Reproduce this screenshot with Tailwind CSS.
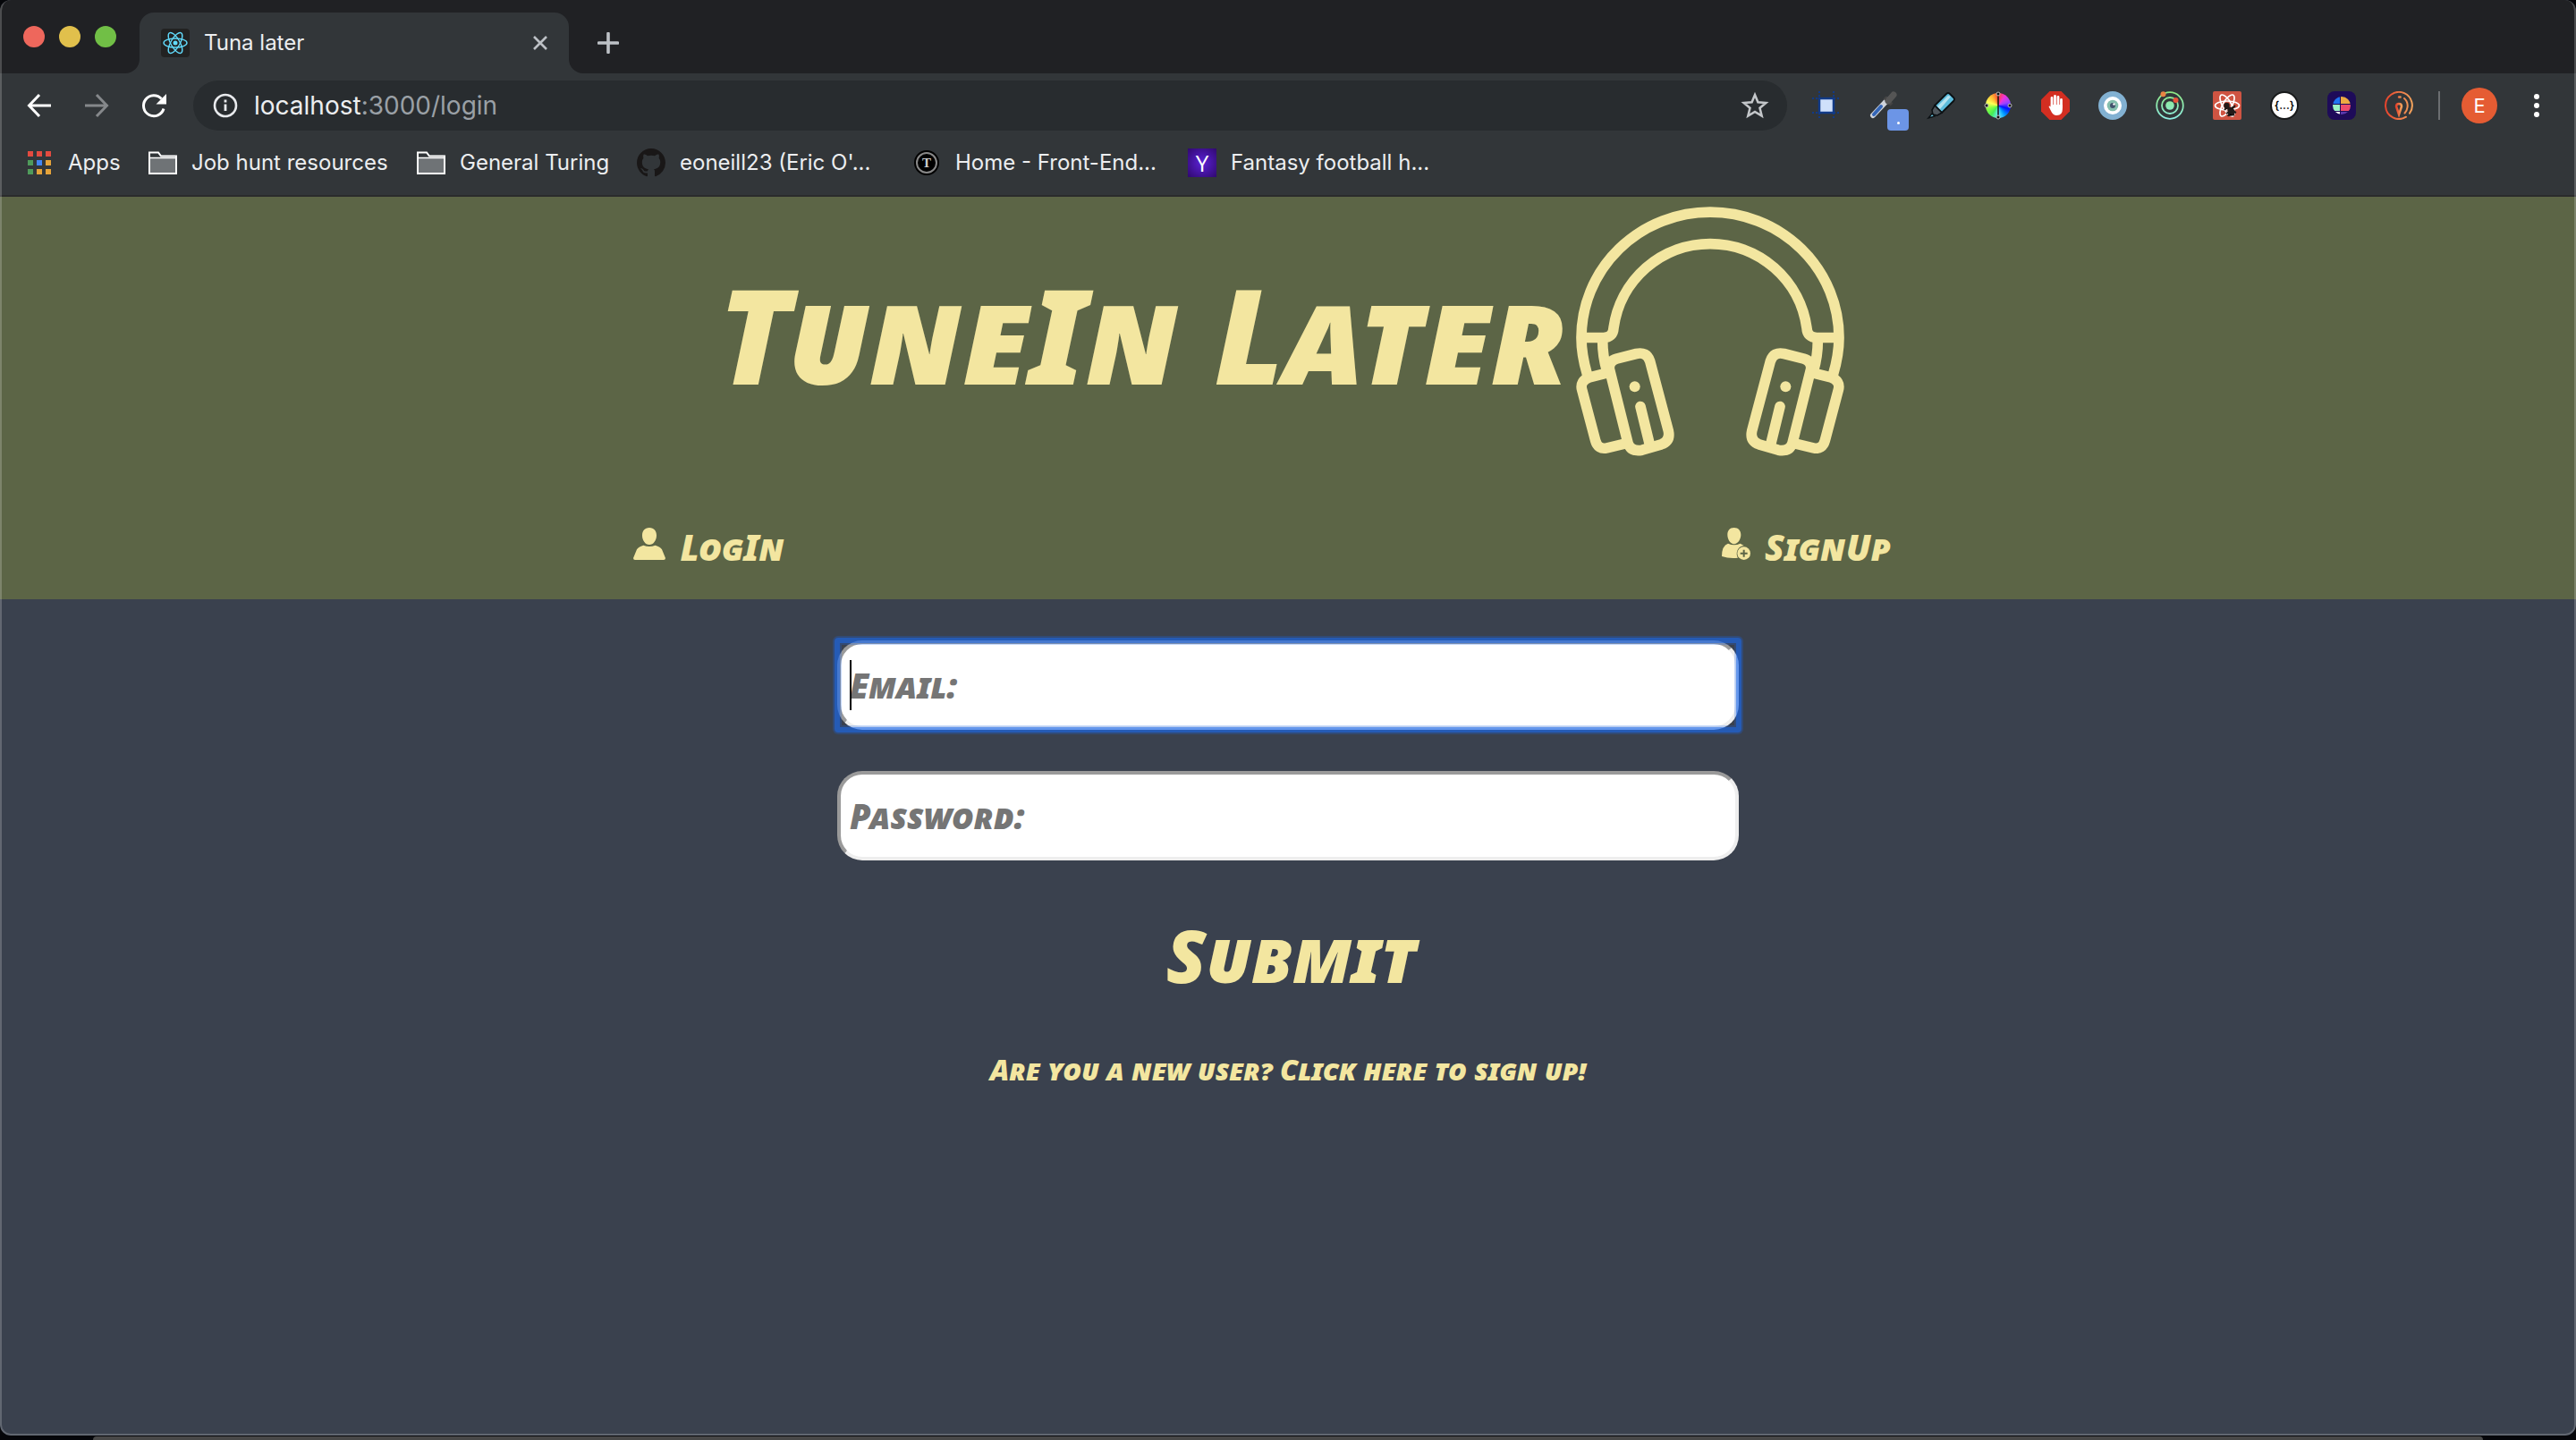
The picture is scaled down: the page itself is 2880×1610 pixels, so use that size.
<!DOCTYPE html>
<html lang="en">
<head>
<meta charset="utf-8">
<title>Tuna later</title>
<script src="https://cdn.jsdelivr.net/npm/@tailwindcss/browser@4"></script>
</head>
<body class="bg-[#05060a]">
<div class="flex min-h-screen flex-col font-['Inter',sans-serif] text-[#eceef0]">
<div class="relative flex flex-1 flex-col overflow-hidden rounded-[12px] bg-[#3a414e]">

  <!-- Tab strip -->
  <div class="flex h-[82px] items-end bg-[#202124]">
    <div class="flex gap-4 self-center pl-[26px]">
      <button aria-label="Close window" class="block size-6 rounded-full bg-[#ee675c]"></button>
      <button aria-label="Minimise window" class="block size-6 rounded-full bg-[#e1c04c]"></button>
      <button aria-label="Zoom window" class="block size-6 rounded-full bg-[#71bf46]"></button>
    </div>
    <svg class="ml-[10px] size-4 text-[#323639]" viewBox="0 0 16 16" aria-hidden="true"><path fill="currentColor" d="M16 0v16H0A16 16 0 0 0 16 0z"/></svg>
    <div class="flex h-[68px] w-[480px] items-center rounded-t-[16px] bg-[#323639] pr-[22px] pl-6">
      <svg class="size-8" viewBox="0 0 32 32" aria-hidden="true"><rect width="32" height="32" rx="4" fill="#222"/><g fill="none" stroke="#61dafb" stroke-width="1.4"><ellipse cx="16" cy="16" rx="13" ry="5"/><ellipse cx="16" cy="16" rx="13" ry="5" transform="rotate(60 16 16)"/><ellipse cx="16" cy="16" rx="13" ry="5" transform="rotate(120 16 16)"/></g><circle cx="16" cy="16" r="2.5" fill="#61dafb"/></svg>
      <span class="ml-4 flex-1 text-[24px] leading-8">Tuna later</span>
      <button aria-label="Close tab"><svg class="block size-5" viewBox="0 0 20 20"><path d="M3 3l14 14M17 3L3 17" stroke="#bdc1c6" stroke-width="2.6"/></svg></button>
    </div>
    <svg class="size-4 text-[#323639]" viewBox="0 0 16 16" aria-hidden="true"><path fill="currentColor" d="M0 0v16h16A16 16 0 0 1 0 0z"/></svg>
    <button aria-label="New tab" class="mb-[22px] ml-4"><svg class="block size-6" viewBox="0 0 24 24"><path d="M12 1.500v21M1.500 12h21" stroke="#bdc1c6" stroke-width="3.600" stroke-linecap="round"/></svg></button>
  </div>

  <!-- Toolbar -->
  <div class="flex h-[72px] items-center bg-[#323639] pr-7 pl-7">
    <div class="flex gap-8">
      <button aria-label="Back"><svg class="block size-8" viewBox="0 0 32 32" fill="none" stroke="#fff" stroke-width="3"><path d="M29 16H5M16 4L4.500 16 16 28"/></svg></button>
      <button aria-label="Forward"><svg class="block size-8" viewBox="0 0 32 32" fill="none" stroke="#85888b" stroke-width="3"><path d="M3 16h24M16 4l11.500 12L16 28"/></svg></button>
      <button aria-label="Reload"><svg class="block size-8" viewBox="0 0 32 32"><path d="M27 19.500A11.500 11.500 0 1 1 24.500 8.500" fill="none" stroke="#fff" stroke-width="3"/><path d="M30 3v11.500H18.500z" fill="#fff"/></svg></button>
    </div>
    <div class="ml-7 flex h-14 flex-1 items-center rounded-full bg-[#282c2f] pr-5 pl-[22px]">
      <svg class="size-7" viewBox="0 0 28 28" aria-hidden="true"><circle cx="14" cy="14" r="12" fill="none" stroke="#e8eaed" stroke-width="2.600"/><path d="M14 12.500v7.500M14 7.500v3" stroke="#e8eaed" stroke-width="2.800"/></svg>
      <p class="ml-[18px] flex-1 text-[28px] leading-9"><span>localhost</span><span class="text-[#9aa0a6]">:3000/login</span></p>
      <button aria-label="Bookmark this page"><svg class="block size-8" viewBox="0 0 32 32"><path d="M16 4l3.400 8.300 9 .7-6.900 5.800 2.200 8.800L16 22.900l-7.700 4.700 2.200-8.800L3.600 13l9-.7z" fill="none" stroke="#c4c7ca" stroke-width="2.500"/></svg></button>
    </div>
    <div class="ml-7 flex items-center gap-8">
      <button aria-label="Window resizer"><svg class="block size-8" viewBox="0 0 32 32"><path d="M0 8h32M0 24h32M8 0v32M24 0v32" stroke="#113a86" stroke-width="2" stroke-dasharray="2 2"/><rect x="8" y="8" width="16" height="16" fill="#cfe0fb" stroke="#113a86" stroke-width="2.500"/></svg></button>
      <button aria-label="Colour picker" class="relative"><svg class="block size-8" viewBox="0 0 32 32"><path d="M4 27L20 10" stroke="#cfd3da" stroke-width="6" stroke-linecap="round"/><path d="M5 26l8-9" stroke="#3466b8" stroke-width="4" stroke-linecap="round"/><path d="M17 7l8 8" stroke="#444" stroke-width="4"/><path d="M21 11l6-7" stroke="#555" stroke-width="7" stroke-linecap="round"/></svg><span class="absolute top-5 left-5 flex size-6 items-end justify-center rounded-[4px] bg-[#6c95e6] pb-[7px]"><i class="block size-[3px] rounded-full bg-white"></i></span></button>
      <button aria-label="Highlighter"><svg class="block size-8" viewBox="0 0 32 32"><path d="M9 16L22 3q2-2 4 0l4 4q2 2 0 4L17 24z" fill="#5cbcdc" stroke="#0b1013" stroke-width="1.800"/><path d="M12 17L24 5l3 1-12 14z" fill="#b5e2ef"/><path d="M9 16l8 8-5 3-5-1-1-5z" fill="#4e565c" stroke="#0b1013" stroke-width="1.500"/><path d="M6 25l3 3-7 2z" fill="#6fd3f0" stroke="#0b1013" stroke-width="1.500"/></svg></button>
      <button aria-label="Colour wheel" class="relative size-8"><span class="mx-auto block size-7 rounded-full bg-[conic-gradient(#f43,#e3d,#94f,#01f,#09f,#6ef,#4e5,#8f4,#ff5,#fb3,#f43)]"></span><svg class="absolute inset-0 size-8" viewBox="0 0 32 32" fill="none" stroke="#111" stroke-width="1.500"><path d="M16 5v22"/><g fill="#111" stroke="#bbb" stroke-width="1"><circle cx="16" cy="3" r="2"/><circle cx="16" cy="29" r="2"/><circle cx="3" cy="16" r="2"/><circle cx="29" cy="16" r="2"/></g></svg></button>
      <button aria-label="Ad blocker"><svg class="block size-8" viewBox="0 0 32 32"><path d="M9.500 0h13L32 9.500v13L22.500 32h-13L0 22.500v-13z" fill="#d32e21"/><path d="M12 18V7.500M15.500 17V5.500M19 17V6.500M22.500 18V9.500" stroke="#fff" stroke-width="2.800" stroke-linecap="round"/><path d="M10.600 15h13.300v5q0 7-6.400 7-4.500 0-6.500-5l-2.500-5q1.500-1.500 3 1z" fill="#fff"/></svg></button>
      <button aria-label="Vision check"><svg class="block size-8" viewBox="0 0 32 32"><circle cx="16" cy="16" r="16" fill="#82b1d2"/><circle cx="16" cy="16" r="10" fill="#fff"/><circle cx="16" cy="16" r="6.300" fill="#85bfae"/><circle cx="16" cy="16" r="3" fill="#43546c"/><circle cx="17.500" cy="14.500" r="1.200" fill="#fff"/></svg></button>
      <button aria-label="Orbit"><svg class="block size-8" viewBox="0 0 32 32"><defs><linearGradient id="orbit" x1="0" y1="0" x2="0" y2="32" gradientUnits="userSpaceOnUse"><stop stop-color="#8ee87f"/><stop offset="1" stop-color="#8debe5"/></linearGradient></defs><g fill="none" stroke="url(#orbit)" stroke-width="1.800"><circle cx="16" cy="16" r="14.800"/><circle cx="16" cy="16" r="9"/></g><circle cx="16" cy="16" r="4.800" fill="url(#orbit)"/><circle cx="8.500" cy="3.300" r="3" fill="#e88443"/><circle cx="22.500" cy="10" r="3" fill="#e8533a"/></svg></button>
      <button aria-label="React developer tools"><svg class="block size-8" viewBox="0 0 32 32"><rect width="32" height="32" rx="2" fill="#cf5442"/><g fill="none" stroke="#fff" stroke-width="1.700"><ellipse cx="16" cy="16" rx="13.500" ry="5"/><ellipse cx="16" cy="16" rx="13.500" ry="5" transform="rotate(60 16 16)"/><ellipse cx="16" cy="16" rx="13.500" ry="5" transform="rotate(120 16 16)"/></g><path d="M13 21l3-4 4 4 5-5M17 28l2-5 5 4M20 21l6 3M15 25l5-3" stroke="#221a18" stroke-width="2"/><circle cx="15.500" cy="16" r="3.200" fill="#221a18"/><ellipse cx="20.500" cy="22" rx="3.500" ry="5" transform="rotate(-42 20.500 22)" fill="#221a18"/></svg></button>
      <button aria-label="JSON formatter" class="flex size-8 items-center justify-center rounded-full border-2 border-[#17191a] bg-white font-['Inter',sans-serif] text-[12px] leading-none font-semibold text-black">{...}</button>
      <button aria-label="Screen capture"><svg class="block size-8" viewBox="0 0 32 32"><defs><clipPath id="disc"><circle cx="16" cy="16" r="10"/></clipPath></defs><rect width="32" height="32" rx="8" fill="#1e0b59"/><g clip-path="url(#disc)"><path d="M6 6h8v8H6z" fill="#2074f0"/><path d="M15 6h11v8H15z" fill="#eea942"/><path d="M6 15h8v7H6z" fill="#9bf3c4"/><path d="M15 15h11v7H15z" fill="#ee4a6c"/><path d="M6 23h8v4H6z" fill="#fff"/><path d="M15 23h11v4H15z" fill="#5b38ad"/></g></svg></button>
      <button aria-label="Toggle"><svg class="block size-8" viewBox="0 0 32 32"><defs><linearGradient id="ember"><stop stop-color="#e6432c"/><stop offset="1" stop-color="#f2a35c"/></linearGradient></defs><g fill="none" stroke="url(#ember)" stroke-width="2" stroke-linecap="round"><path d="M24 28.700A15 15 0 1 1 22 2.200a15 15 0 0 1 6 22.500M22 8q4.500 4 3.500 10-.5 4-3 6.500"/><path d="M16 26l-3-9q0-3 3-3t3 3zM16 6.500h1.500" stroke-width="2.500"/></g></svg></button>
    </div>
    <div class="ml-7 h-8 w-[2px] bg-[#6b6e71]"></div>
    <button aria-label="Profile" class="ml-6 flex size-10 items-center justify-center rounded-full bg-[#e55c33] text-[22px] leading-none text-white">E</button>
    <button aria-label="Menu" class="ml-7"><svg class="block size-8" viewBox="0 0 32 32" fill="#fff"><circle cx="16" cy="6" r="3"/><circle cx="16" cy="16" r="3"/><circle cx="16" cy="26" r="3"/></svg></button>
  </div>

  <!-- Bookmarks -->
  <nav aria-label="Bookmarks" class="flex h-[66px] items-center border-b-2 border-[#2a2b2c] bg-[#323639] pb-2 pl-[30px] text-[24px] leading-8 whitespace-nowrap">
    <a href="#" class="flex w-[136px] items-center gap-[18px]"><svg class="size-7" viewBox="0 0 28 28"><path d="M1 1h6v6H1zM11 1h6v6h-6zM21 1h6v6h-6z" fill="#e34b40"/><path d="M1 11h6v6H1zM1 21h6v6H1z" fill="#4f9b5b"/><path d="M11 11h6v6h-6z" fill="#4285f4"/><path d="M21 11h6v6h-6zM11 21h6v6h-6zM21 21h6v6h-6z" fill="#e5a33a"/></svg>Apps</a>
    <a href="#" class="flex w-[300px] items-center gap-4"><svg class="size-8" viewBox="0 0 32 32"><path d="M1 4.500h10l3 4h17V28H1z" fill="#323639" stroke="#fff" stroke-width="2"/><path d="M2 11h28v16H2z" fill="#6f7376"/><path d="M1 10.500h30" stroke="#fff" stroke-width="1.500"/></svg>Job hunt resources</a>
    <a href="#" class="flex w-[246px] items-center gap-4"><svg class="size-8" viewBox="0 0 32 32"><path d="M1 4.500h10l3 4h17V28H1z" fill="#323639" stroke="#fff" stroke-width="2"/><path d="M2 11h28v16H2z" fill="#6f7376"/><path d="M1 10.500h30" stroke="#fff" stroke-width="1.500"/></svg>General Turing</a>
    <a href="#" class="flex w-[308px] items-center gap-4"><svg class="size-8" viewBox="0 0 16 16"><path fill="#191717" d="M8 0C3.580 0 0 3.580 0 8c0 3.540 2.290 6.530 5.470 7.590.4.070.55-.17.55-.38 0-.19-.01-.82-.01-1.490-2.010.37-2.530-.49-2.690-.94-.09-.23-.48-.94-.82-1.130-.28-.15-.68-.52-.01-.53.63-.01 1.080.58 1.230.82.720 1.210 1.870.87 2.330.66.070-.52.280-.87.510-1.070-1.780-.2-3.640-.89-3.640-3.950 0-.87.310-1.590.820-2.150-.08-.2-.36-1.020.080-2.120 0 0 .670-.21 2.200.82.640-.18 1.320-.27 2-.27s1.360.09 2 .27c1.530-1.040 2.200-.82 2.200-.82.440 1.100.16 1.920.080 2.120.51.56.82 1.270.82 2.150 0 3.070-1.870 3.750-3.650 3.950.29.250.54.730.54 1.480 0 1.070-.01 1.930-.01 2.200 0 .21.150.46.550.38A8.010 8.010 0 0 0 16 8c0-4.420-3.580-8-8-8z"/></svg>eoneill23 (Eric O'...</a>
    <a href="#" class="flex w-[308px] items-center gap-4"><span class="flex size-8 items-center justify-center"><span class="flex size-7 items-center justify-center rounded-full border-2 border-black bg-black"><span class="flex size-6 items-center justify-center rounded-full border-2 border-[#888] font-['Liberation_Serif',serif] text-[15px] leading-none font-bold text-[#ccc]">T</span></span></span>Home - Front-End...</a>
    <a href="#" class="flex items-center gap-4"><span class="flex size-8 items-center justify-center bg-[radial-gradient(#5b22d6,#30086e)] font-['Open_Sans',sans-serif] text-[26px] leading-none text-white">Y</span>Fantasy football h...</a>
  </nav>

  <!-- Login page -->
  <div class="flex-1 font-['Permanent_Marker','Noto_Sans',sans-serif] font-black text-[#f3e6a0] italic [font-variant-caps:small-caps]">
    <header class="h-[450px] bg-[#5c6546]">
      <div class="flex items-start justify-center gap-2 pt-[11px] pr-4">
        <h1 class="pt-[52px] text-[148px] leading-[180px] whitespace-nowrap">TuneIn Later</h1>
        <svg class="h-[279px] w-[300px]" viewBox="66 48 900 836" fill="none" stroke="#f3e6a0" stroke-width="35" aria-hidden="true">
          <path d="M104 612Q84 545 84 487A432 421 0 0 1 948 487Q948 545 928 612"/>
          <path d="M84 487H158Q190 487 192 455A327 327 0 0 1 840 455Q842 487 874 487H948"/>
          <g id="cup"><path d="M155 495Q155 550 170 600M180 603L112 620Q78 632 86 662L131 832Q140 864 170 857L232 842"/><path d="M178 592Q175 566 202 558L268 541Q303 533 314 566L376 800Q383 834 352 845L288 864Q250 871 240 840Z"/><path d="M282 718L313 845" stroke-linecap="round"/><circle cx="263" cy="651" r="18" fill="#f3e6a0" stroke="none"/></g>
          <use href="#cup" transform="matrix(-1 0 0 1 1032 0)"/>
        </svg>
      </div>
      <nav aria-label="Account" class="mt-[72px] flex justify-between pr-[26.6%] pl-[24.6%] text-[40px] leading-[60px]">
        <a href="#" class="flex items-center gap-4"><svg class="mb-2 size-9" viewBox="54 90 108 108" fill="#f3e6a0" aria-hidden="true"><path d="M108 90C124 90 132 101 132 116S122 147 108 147 84 131 84 116 92 90 108 90zM88 149Q108 157 128 149Q145 154 150 163L162 192Q162 198 156 198H60Q54 198 54 192L66 163Q71 154 88 149z"/></svg>LogIn</a>
        <a href="#" class="flex items-center gap-4"><svg class="mb-2 h-9 w-8" viewBox="84 90 96 108" fill="#f3e6a0" aria-hidden="true"><path d="M125 90C140 90 148 100 148 114S138 145 125 145 103 128 103 114 110 90 125 90zM105 143Q125 153 146 143L158 150A27 27 0 0 0 138 191Q108 194 84 186Q84 150 105 143z"/><circle cx="158" cy="176" r="22"/><path d="M158 164v24M146 176h24" stroke="#5c6546" stroke-width="6"/></svg>SignUp</a>
      </nav>
    </header>

    <form class="mx-auto flex w-[35%] flex-col items-center pt-[46px]">
      <div class="relative w-full">
        <input id="email" type="text" aria-label="Email" placeholder="Email:" class="block h-[100px] w-full rounded-[28px] border-4 border-t-[#9a9a9a] border-r-[#eee] border-b-[#eee] border-l-[#9a9a9a] bg-white px-[10px] text-[38px] italic outline-none [font-variant-caps:small-caps] placeholder:text-[#757575]">
        <span class="pointer-events-none absolute -inset-[3px] rounded-[4px] border-[6px] border-[#1b68eb]/66 shadow-[0_0_0_2px_#1b68eb40,inset_0_0_0_2px_#1b68eb40]"></span>
        <span class="absolute top-[22px] left-[14px] h-14 w-[2px] bg-black"></span>
      </div>
      <input id="password" type="password" aria-label="Password" placeholder="Password:" class="mt-[46px] block h-[100px] w-full rounded-[28px] border-4 border-t-[#9a9a9a] border-r-[#eee] border-b-[#eee] border-l-[#9a9a9a] bg-white px-[10px] text-[38px] italic outline-none [font-variant-caps:small-caps] placeholder:text-[#757575]">
      <button type="submit" class="mt-[50px] ml-2 text-[82px] leading-[110px] font-black italic [font-variant-caps:small-caps]">Submit</button>
      <a href="#" class="mt-[50px] text-[32px] leading-[48px] whitespace-nowrap">Are you a new user? Click here to sign up!</a>
    </form>
  </div>

  <div class="pointer-events-none absolute inset-0 rounded-[12px] border-2 border-t-0 border-white/20"></div>
</div>
<div class="mx-[104px] mt-[1px] h-1 rounded-t-[8px] bg-[#484848]"></div>
</div>
</body>
</html>
